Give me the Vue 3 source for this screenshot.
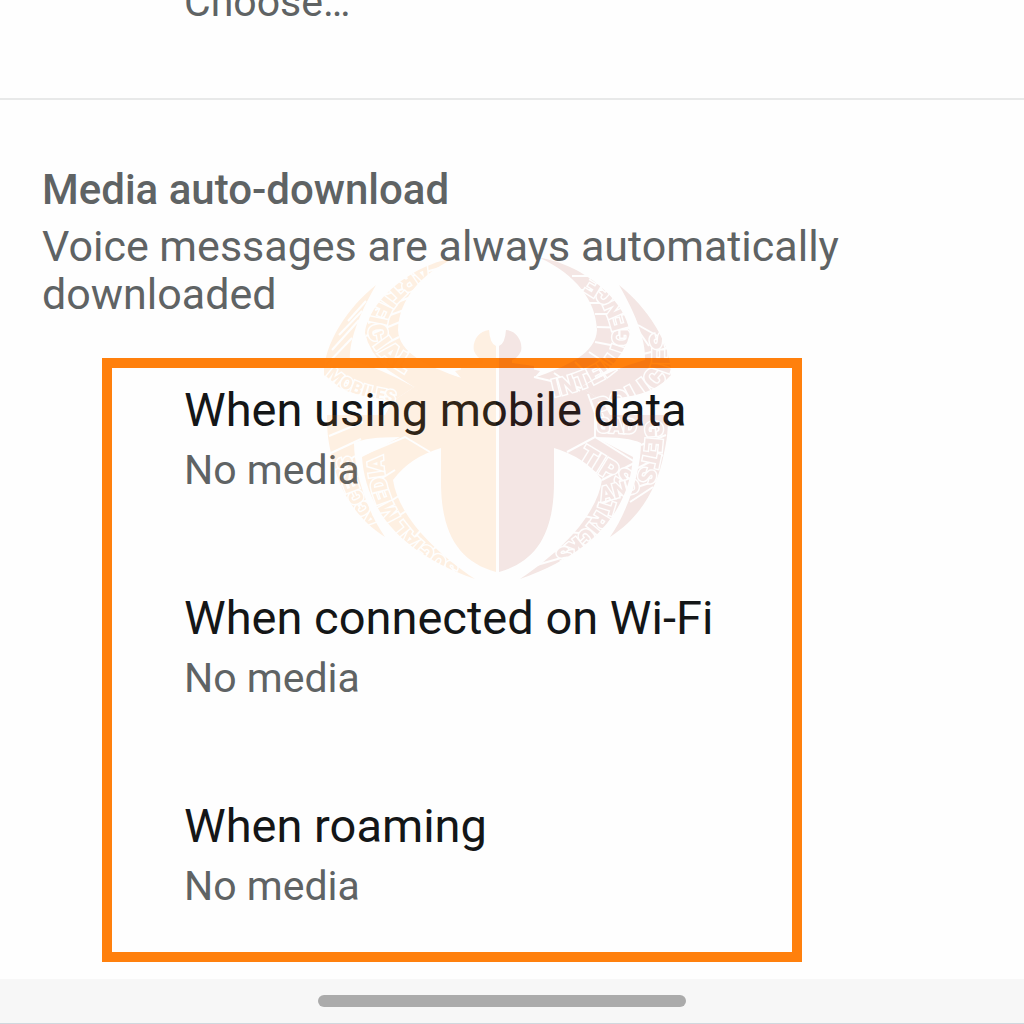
<template>
  <div class="screen">
    <button class="previous">Choose…</button>

    <main class="section">
      <h2 class="section-title">Media auto-download</h2>
      <p class="section-text">Voice messages are always automatically downloaded</p>

      <div class="options">
        <button v-for="option in options" :key="option.title" class="option">
          <span class="option-title">{{ option.title }}</span>
          <span class="option-value">{{ option.value }}</span>
        </button>
      </div>

      <svg class="watermark" viewBox="320 250 356 336" aria-hidden="true">
        <defs>
          <g id="half">
            <path d="M496 346 Q490 344 489 330 C478 331 472 342 474 351 Q477 358 483 360 L483 364 L455 371 L461 378 L441 448 L441 482 C441 535 460 562 496 572 Z" />
            <path d="M455 258 C417 263 370 297 365 333 Q369 352 388 370 L414 387 L461 378 C427 366 399 353 398 330 C399 300 420 274 455 258 Z" />
            <path d="M376 285 C349 306 323 344 324 375 Q340 393 370 397 L393 401 L414 387 Q380 368 350 360 C349 342 358 316 376 285 Z" />
            <path d="M483 363 L461 366 L461 378 L440 372 L414 387 L393 401 L385 415 L327 415 C327 431 328 440 331 453 C338 491 357 519 385 537 C366 510 354 469 354 443 Q366 437 400 437 L362 457 C365 499 389 549 475 579 C430 549 398 513 393 480 Q410 457 441 448 L496 448 L496 363 Z" />
          </g>
          <path id="leg-a" d="M430 269 C384 287 365 325 383 346 Q390 357 420 373" />
          <path id="leg-b" d="M330 371 Q350 392 398 397" />
          <path id="leg-c" d="M456 573 C406 547 376 511 375 457" />
          <path id="leg-d" d="M374 525 C350 500 340 465 341 424" />
          <path id="leg-e" d="M552 389 C619 374 629 350 618 318 S600 295 582 278" />
          <path id="leg-f" d="M594 412 C642 396 668 382 664 350 Q661 330 650 314" />
          <path id="leg-g" d="M583 450 L632 480" />
          <path id="leg-h" d="M600 496 L634 487" />
          <path id="leg-i" d="M606 500 C601 530 570 552 534 571" />
          <path id="leg-j" d="M645 421 C648 450 640 480 624 504" />
          <path id="leg-k" d="M596 432 L645 434" />
          <mask id="cuts" maskUnits="userSpaceOnUse" x="320" y="250" width="356" height="336">
            <rect x="320" y="250" width="356" height="336" fill="white" />
            <path
              class="seams"
              d="M328 375 L388 400 M326 365 L352 338 M332 350 L359 320 M339 335 L362 311 M348 321 L366 301
                 M366 336 L405 320 M368 323 L407 309 M375 310 L414 296 M384 295 L428 281 M398 280 L443 267 M374 350 L399 337 M387 362 L413 350
                 M362 455 L405 437 L430 452 M371 485 L395 470 M381 507 L402 494 M392 520 L411 508 M410 542 L424 527 M426 554 L442 543 M443 565 L456 558
                 M329 436 L363 422 M331 453 L361 439 M341 486 L358 476 M353 510 L368 499 M335 470 L355 456
                 M572 276 L590 276 M580 290 L607 290 M589 303 L616 303 M595 314 L622 314 M597 327 L629 328 M595 342 L626 348 M589 352 L613 368 M575 362 L596 382 M554 373 L580 391 M534 377 L581 388
                 M638 325 L663 339 M635 326 L649 346 M643 354 L672 347 M588 394 L596 416
                 M567 452 L595 437 L635 462 M602 480 L636 462 M597 506 L628 492 M584 516 L612 522 M568 532 L601 535 M549 552 L583 548 M530 567 L561 558
                 M595 437 L595 414 M641 445 L666 435 M638 468 L663 455 M634 488 L659 480 M630 502 L653 487"
            />
            <g class="lettering">
              <text v-for="word in words" :key="word.path" :font-size="word.size" :dy="word.dy">
                <textPath :href="'#' + word.path">{{ word.text }}</textPath>
              </text>
            </g>
          </mask>
        </defs>
        <g mask="url(#cuts)">
          <use href="#half" class="half-left" />
          <use href="#half" class="half-right" transform="matrix(-1 0 0 1 995 0)" />
        </g>
      </svg>
    </main>

    <footer class="gesture-bar">
      <div class="handle"></div>
    </footer>
  </div>
</template>

<script setup>
const options = [
  { title: 'When using mobile data', value: 'No media' },
  { title: 'When connected on Wi-Fi', value: 'No media' },
  { title: 'When roaming', value: 'No media' }
];

const words = [
  { path: 'leg-a', text: 'ARTIFICIAL', size: 26, dy: 8 },
  { path: 'leg-b', text: 'MOBILES', size: 17, dy: 6 },
  { path: 'leg-c', text: 'SOCIAL MEDIA', size: 22, dy: 8 },
  { path: 'leg-d', text: 'ACCESS', size: 20, dy: 8 },
  { path: 'leg-e', text: 'INTELLIGENCE', size: 24, dy: 8 },
  { path: 'leg-f', text: 'POLICIES', size: 28, dy: 8 },
  { path: 'leg-g', text: 'TIPS', size: 26, dy: 12 },
  { path: 'leg-h', text: 'AND', size: 20, dy: 6 },
  { path: 'leg-i', text: 'TRICKS', size: 22, dy: 6 },
  { path: 'leg-j', text: 'GETS', size: 24, dy: 0 },
  { path: 'leg-k', text: 'GAD', size: 20, dy: 0 }
];
</script>

<style>
body {
  margin: 0;
  background-color: #fefefe;
}
</style>

<style scoped>
.screen {
  display: flex;
  flex-direction: column;
  min-height: 100vh;
  overflow: hidden;
  box-sizing: border-box;
  font-family: Roboto, "Liberation Sans", sans-serif;
  color: #5f6364;
}

button {
  padding: 0;
  border: none;
  background: none;
  color: inherit;
  font-family: inherit;
  text-align: left;
  cursor: pointer;
}

.previous {
  margin-top: -22px;
  padding: 0 40px 72px 184px;
  border-bottom: 2px solid #e8e9e9;
  font-size: 41px;
  line-height: 48px;
}

.section {
  position: relative;
  padding: 66px 42px 16px;
}

.section-title {
  margin: 0 0 8px;
  font-size: 42px;
  font-weight: 500;
  line-height: 48px;
}

.section-text {
  margin: 0;
  font-size: 43px;
  line-height: 48px;
}

.options {
  display: flex;
  flex-direction: column;
  gap: 96px;
  margin: 40px 180px 0 60px;
  padding: 14px 24px 42px 72px;
  border: 10px solid #ff800d;
}

.option {
  display: flex;
  flex-direction: column;
  gap: 8px;
}

.option-title {
  font-size: 47px;
  line-height: 56px;
  color: #141617;
}

.option-value {
  font-size: 41px;
  line-height: 48px;
}

/* sits over the text and the frame */
.watermark {
  position: absolute;
  top: 150px;
  left: 320px;
  width: 356px;
  height: 336px;
  pointer-events: none;
}

.half-left {
  fill: #ff8a1e;
  opacity: 0.12;
}

.half-right {
  fill: #aa3c28;
  opacity: 0.12;
}

.lettering {
  fill: white;
  stroke: black;
  stroke-width: 3px;
  paint-order: stroke;
  font-weight: 900;
}

.seams {
  fill: none;
  stroke: black;
  stroke-width: 2px;
}

.gesture-bar {
  display: flex;
  align-items: center;
  justify-content: center;
  height: 44px;
  margin-top: auto;
  border-bottom: 1px solid #d0d8de;
  background-color: #f7f7f7;
}

.handle {
  width: 36%;
  height: 12px;
  margin-right: 20px;
  border-radius: 6px;
  background-color: #ababab;
}
</style>
